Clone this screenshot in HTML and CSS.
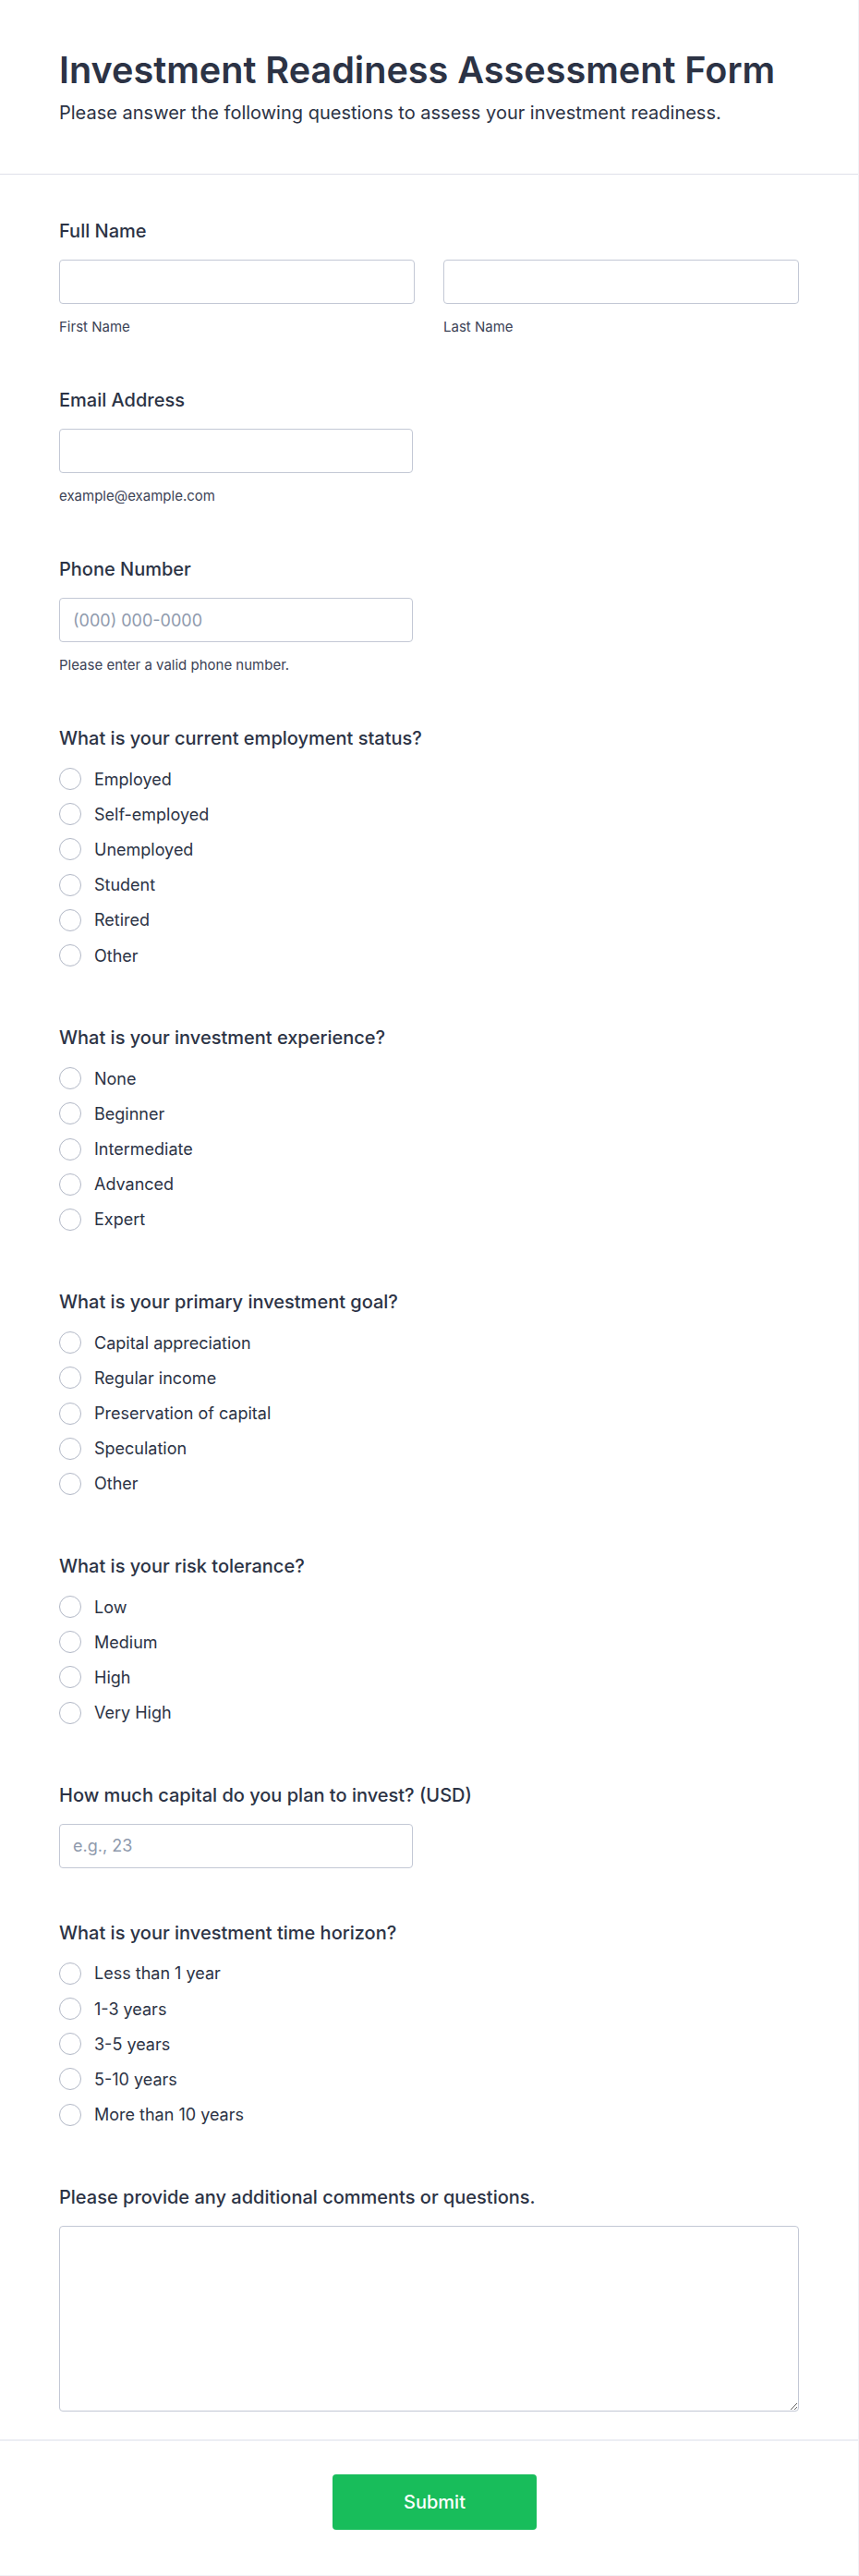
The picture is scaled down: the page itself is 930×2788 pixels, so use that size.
FILE: index.html
```html
<!DOCTYPE html>
<html lang="en">
<head>
  <meta charset="UTF-8" />
  <title>Investment Readiness Assessment Form</title>
  <link rel="stylesheet" href="styles.css">
</head>
<body>
  <form class="form">
    <!-- Header -->
    <div class="form-header">
      <h1>Investment Readiness Assessment Form</h1>
      <p class="subtitle">Please answer the following questions to assess your investment readiness.</p>
    </div>

    <div class="form-body">
      <div class="field">
        <label class="field-label">Full Name</label>
        <div class="name-row">
          <div>
            <input type="text" class="text-input" />
            <div class="sublabel">First Name</div>
          </div>
          <div>
            <input type="text" class="text-input" />
            <div class="sublabel">Last Name</div>
          </div>
        </div>
      </div>

      <div class="field">
        <label class="field-label">Email Address</label>
        <input type="email" class="text-input short" />
        <div class="sublabel">example@example.com</div>
      </div>

      <div class="field">
        <label class="field-label">Phone Number</label>
        <input type="tel" class="text-input short" placeholder="(000) 000-0000" />
        <div class="sublabel">Please enter a valid phone number.</div>
      </div>

      <div class="field">
        <div class="field-label radio-title">What is your current employment status?</div>
        <div class="options">
          <label class="option"><input type="radio" name="employment" />Employed</label>
          <label class="option"><input type="radio" name="employment" />Self-employed</label>
          <label class="option"><input type="radio" name="employment" />Unemployed</label>
          <label class="option"><input type="radio" name="employment" />Student</label>
          <label class="option"><input type="radio" name="employment" />Retired</label>
          <label class="option"><input type="radio" name="employment" />Other</label>
        </div>
      </div>

      <div class="field">
        <div class="field-label radio-title">What is your investment experience?</div>
        <div class="options">
          <label class="option"><input type="radio" name="experience" />None</label>
          <label class="option"><input type="radio" name="experience" />Beginner</label>
          <label class="option"><input type="radio" name="experience" />Intermediate</label>
          <label class="option"><input type="radio" name="experience" />Advanced</label>
          <label class="option"><input type="radio" name="experience" />Expert</label>
        </div>
      </div>

      <div class="field">
        <div class="field-label radio-title">What is your primary investment goal?</div>
        <div class="options">
          <label class="option"><input type="radio" name="goal" />Capital appreciation</label>
          <label class="option"><input type="radio" name="goal" />Regular income</label>
          <label class="option"><input type="radio" name="goal" />Preservation of capital</label>
          <label class="option"><input type="radio" name="goal" />Speculation</label>
          <label class="option"><input type="radio" name="goal" />Other</label>
        </div>
      </div>

      <div class="field">
        <div class="field-label radio-title">What is your risk tolerance?</div>
        <div class="options">
          <label class="option"><input type="radio" name="risk" />Low</label>
          <label class="option"><input type="radio" name="risk" />Medium</label>
          <label class="option"><input type="radio" name="risk" />High</label>
          <label class="option"><input type="radio" name="risk" />Very High</label>
        </div>
      </div>

      <div class="field">
        <label class="field-label">How much capital do you plan to invest? (USD)</label>
        <input type="number" class="text-input short" placeholder="e.g., 23" />
      </div>

      <div class="field">
        <div class="field-label radio-title">What is your investment time horizon?</div>
        <div class="options">
          <label class="option"><input type="radio" name="horizon" />Less than 1 year</label>
          <label class="option"><input type="radio" name="horizon" />1-3 years</label>
          <label class="option"><input type="radio" name="horizon" />3-5 years</label>
          <label class="option"><input type="radio" name="horizon" />5-10 years</label>
          <label class="option"><input type="radio" name="horizon" />More than 10 years</label>
        </div>
      </div>

      <div class="field">
        <label class="field-label">Please provide any additional comments or questions.</label>
        <textarea class="comments"></textarea>
      </div>
    </div>

    <!-- Submit -->
    <div class="form-footer">
      <button type="submit" class="submit-btn">Submit</button>
    </div>
  </form>
</body>
</html>
```

FILE: styles.css
```css
body {
  font-family: Inter, "Noto Sans", sans-serif;
  background-color: #f1f1f6;
  color: #2c3345;
  margin: 0;
  padding: 0;
}

.form {
  width: 929px;
  background-color: #fff;
}

.form-header {
  padding: 52px 64px 54px;
  border-bottom: 1px solid #dfe0ea;
}

h1 {
  font-size: 39.6px;
  line-height: 48px;
  font-weight: 600;
  margin: 0;
}

.subtitle {
  font-size: 20px;
  line-height: 24px;
  margin: 10px 0 0;
}

.form-body {
  padding: 50px 64px 30px;
  display: flex;
  flex-direction: column;
  gap: 59px;
}

.field {
  display: flex;
  flex-direction: column;
}

.field-label {
  font-size: 20px;
  line-height: 24px;
  font-weight: 500;
  margin-top: -1px;
  margin-bottom: 19px;
}

.field-label.radio-title {
  margin-bottom: 13px;
}

.name-row {
  display: grid;
  grid-template-columns: 385px 385px;
  gap: 31px;
}

.text-input {
  box-sizing: border-box;
  width: 100%;
  height: 48px;
  padding: 0 14px;
  font-family: inherit;
  font-size: 18px;
  color: #2c3345;
  border: 1px solid #c3c8d5;
  border-radius: 4px;
  background: #fff;
  outline: none;
}

.text-input.short {
  width: 383px;
}

.text-input::placeholder {
  color: #8f9aad;
}

.sublabel {
  font-size: 15px;
  line-height: 18px;
  margin-top: 16px;
  color: #3c4356;
}

.options {
  display: flex;
  flex-direction: column;
}

.option {
  height: 38.2px;
  display: flex;
  align-items: center;
  gap: 14px;
  font-size: 18px;
  color: #2c3345;
}

.option input {
  appearance: none;
  width: 24px;
  height: 24px;
  margin: 0;
  border: 1px solid #b2b8c6;
  border-radius: 50%;
  background: #fff;
  flex: none;
}

.comments {
  box-sizing: border-box;
  width: 100%;
  height: 201px;
  border: 1px solid #c3c8d5;
  border-radius: 4px;
  font-family: inherit;
  font-size: 18px;
  padding: 10px 14px;
  outline: none;
}

.form-footer {
  border-top: 2px solid #eceef4;
  padding: 36px 0 49px 12px;
  text-align: center;
}

.submit-btn {
  width: 221px;
  height: 60px;
  background-color: #18bd5b;
  color: #fff;
  border: none;
  border-radius: 4px;
  font-family: inherit;
  font-size: 20px;
  font-weight: 500;
  cursor: pointer;
}
```
